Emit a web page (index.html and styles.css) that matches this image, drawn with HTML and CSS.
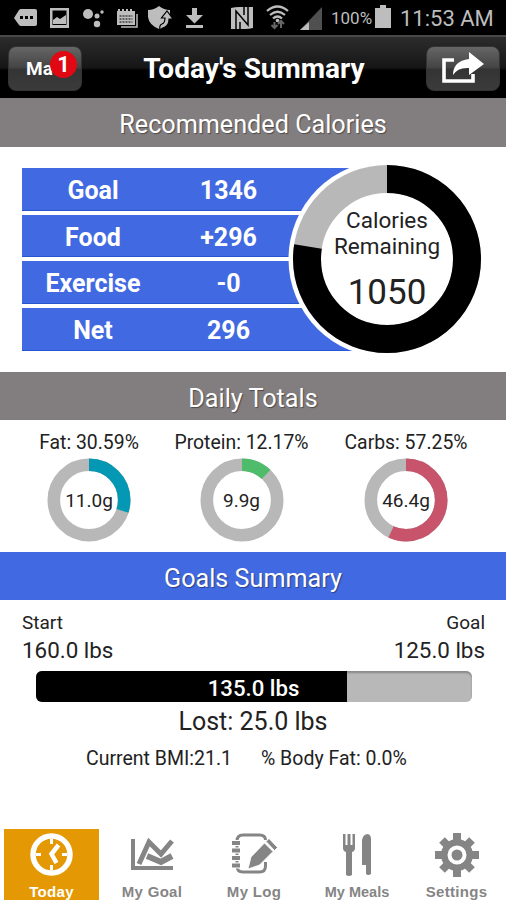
FILE: index.html
```html
<!DOCTYPE html>
<html lang="en">
<head>
  <meta charset="UTF-8" />
  <meta name="viewport" content="width=device-width, initial-scale=1.0"/>
  <title>Today's Summary</title>
  <link rel="stylesheet" href="styles.css">
</head>
<body>
  <!-- phone status bar -->
  <div class="status">
    <svg class="status-left" width="231" height="35" viewBox="0 0 231 35" fill="#bdbdbd">
      <path d="M14 18l5-8q1-1 2-1h14q2 0 2 2v13q0 2-2 2H21q-1 0-2-1z"/>
      <path d="M20 16h3v3h-3zM25 16h3v3h-3zM30 16h3v3h-3z" fill="#000"/>
      <path d="M50 8h19v20H50zM52.500 10.500v14.500h14v-14.500z" fill-rule="evenodd"/>
      <path d="M53 24v-4l4-3 3 2 6-4v9z"/>
      <circle cx="88" cy="14" r="5"/><circle cx="97" cy="16" r="2.500"/><circle cx="102" cy="12" r="1.700"/><circle cx="97" cy="24" r="3.200"/>
      <path d="M117 11h18v14h-18z"/><path d="M121 27h16V14" fill="none" stroke="#bdbdbd" stroke-width="1.500"/>
      <path d="M119 9v4M123 9v4M127 9v4M131 9v4" stroke="#bdbdbd" stroke-width="2"/>
      <path d="M119.500 16h13M119.500 19h13M119.500 22h13" stroke="#000" stroke-width="1.200" stroke-dasharray="2 1"/>
      <path d="M148 10q6 0 11-4 5 4 11 4v7q-1 8-11 12-10-4-11-12z"/>
      <path d="M160 30q-1-5 2-6 3-1 3-6h-3.500l5.500-7 6 8h-4q0 6-4 8-3 1-5 3z" stroke="#000" stroke-width="1.200"/>
      <path d="M192 8h5v7h6l-8.500 8.500L186 15h6zM186 25h17v3h-17z"/>
    </svg>
    <svg class="status-right" width="92" height="35" viewBox="0 0 92 35" fill="#bdbdbd">
      <path d="M0 8q4-1 8-1h14v21q-4 1-8 1H0z"/>
      <path d="M5 29V11l12 14V7" fill="none" stroke="#000" stroke-width="1.500"/>
      <path d="M9 22v7M13 7v8" fill="none" stroke="#000" stroke-width="1.500"/>
      <g fill="none" stroke="#bdbdbd" stroke-width="2.300"><path d="M36 11q10.500-9 21 0M39 15q7.500-6.500 15 0M42 18.500q4.500-4 9 0"/></g>
      <circle cx="46.500" cy="20.500" r="1.800"/>
      <path d="M43.500 22v5m-3-2 3 3 3-3M50 28v-6m-3 2 3-3 3 3" fill="none" stroke="#666" stroke-width="2"/>
      <path d="M69 30L91 7v23z" fill="#505050"/><path d="M69 30l9-8v8z"/>
    </svg>
    <span class="battery-text">100%</span>
    <svg class="battery" width="16" height="24" viewBox="0 0 16 24" fill="#bdbdbd"><path d="M0 3h5V0h6v3h5v20H0z"/></svg>
    <span class="clock">11:53 AM</span>
  </div>

  <header>
    <button class="nav-btn menu-btn">Ma<span class="badge">1</span></button>
    <h1>Today's Summary</h1>
    <button class="nav-btn share-btn">
      <svg width="44" height="34" viewBox="0 0 44 34">
        <path d="M19 9H9v21h29V23" fill="none" stroke="#fff" stroke-width="3.600"/>
        <path d="M18 24q0-14 16-16V1l15 12-15 11v-7q-11-1-16 7z" fill="#fff"/>
      </svg>
    </button>
  </header>

  <h2 class="band">Recommended Calories</h2>
  <section class="calories">
    <div class="rows">
      <div class="row"><span>Goal</span><span>1346</span></div>
      <div class="row"><span>Food</span><span>+296</span></div>
      <div class="row"><span>Exercise</span><span>-0</span></div>
      <div class="row"><span>Net</span><span>296</span></div>
    </div>
    <div class="big-ring">
      <svg width="198" height="198" viewBox="0 0 198 198">
        <circle cx="99" cy="99" r="98.500" fill="#fff"/>
        <circle cx="99" cy="99" r="80" class="track" stroke-width="28"/>
        <circle cx="99" cy="99" r="80" class="arc" stroke="#000" stroke-width="28" pathLength="100" stroke-dasharray="77.5 100" transform="rotate(-90 99 99)"/>
      </svg>
      <div class="ring-text">
        <span>Calories</span>
        <span>Remaining</span>
        <strong>1050</strong>
      </div>
    </div>
  </section>

  <h2 class="band">Daily Totals</h2>
  <section class="totals">
    <div class="total fat">
      <p>Fat: 30.59%</p>
      <div class="ring">
        <svg width="84" height="84" viewBox="0 0 84 84">
          <circle cx="42" cy="42" r="35.200" class="track" stroke-width="12.600"/>
          <circle cx="42" cy="42" r="35.200" class="arc" stroke="#0598b4" stroke-width="12.600" pathLength="100" stroke-dasharray="30 100" transform="rotate(-90 42 42)"/>
        </svg>
        <span>11.0g</span>
      </div>
    </div>
    <div class="total protein">
      <p>Protein: 12.17%</p>
      <div class="ring">
        <svg width="84" height="84" viewBox="0 0 84 84">
          <circle cx="42" cy="42" r="35.200" class="track" stroke-width="12.600"/>
          <circle cx="42" cy="42" r="35.200" class="arc" stroke="#4fbc6b" stroke-width="12.600" pathLength="100" stroke-dasharray="12 100" transform="rotate(-90 42 42)"/>
        </svg>
        <span>9.9g</span>
      </div>
    </div>
    <div class="total carbs">
      <p>Carbs: 57.25%</p>
      <div class="ring">
        <svg width="84" height="84" viewBox="0 0 84 84">
          <circle cx="42" cy="42" r="35.200" class="track" stroke-width="12.600"/>
          <circle cx="42" cy="42" r="35.200" class="arc" stroke="#c8546c" stroke-width="12.600" pathLength="100" stroke-dasharray="57 100" transform="rotate(-90 42 42)"/>
        </svg>
        <span>46.4g</span>
      </div>
    </div>
  </section>

  <h2 class="band blue">Goals Summary</h2>
  <section class="goals">
    <div class="ends">
      <div><small>Start</small><p>160.0 lbs</p></div>
      <div class="end"><small>Goal</small><p>125.0 lbs</p></div>
    </div>
    <div class="bar">
      <div class="fill" style="width: 71.5%"></div>
      <span>135.0 lbs</span>
    </div>
    <p class="lost">Lost: 25.0 lbs</p>
    <div class="body-stats">
      <span class="bmi">Current BMI:21.1</span>
      <span class="body-fat">% Body Fat: 0.0%</span>
    </div>
  </section>

  <nav>
    <a class="tab active" href="#today">
      <svg width="44" height="44" viewBox="0 0 44 44" fill="none" stroke="#fff">
        <circle cx="21.500" cy="21.500" r="18.500" stroke-width="5.500"/>
        <path d="M21.500 6v5M21.500 32v5M6 21.500h5M32 21.500h5" stroke-width="3"/>
        <path d="M28.500 12l-7 9 5 9" stroke-width="4.500"/>
      </svg>
      <span>Today</span>
    </a>
    <a class="tab" href="#goal">
      <svg width="44" height="44" viewBox="0 0 44 44" fill="none" stroke="#858585">
        <path d="M3 6v29H43" stroke-width="4"/>
        <path d="M9 31L19 9l12 12L42 8" stroke-width="5"/>
        <path d="M17 23l14 6 11-6" stroke-width="6"/>
      </svg>
      <span>My Goal</span>
    </a>
    <a class="tab" href="#log">
      <svg width="44" height="44" viewBox="0 0 44 44" fill="none" stroke="#858585">
        <path d="M33.500 7q0-5-6-5H11q-6 0-6 6v25q0 6 6 6h16.500q6 0 6-6v-4" stroke-width="3"/>
        <path d="M0 10h8M0 17.500h8M0 25h8M0 32.500h8" stroke="#fff" stroke-width="6"/>
        <path d="M0 10h8M0 17.500h8M0 25h8M0 32.500h8" stroke-width="4"/>
        <path d="M16 36l3-12L32.500 10l8.500 8.500L27.500 32zM34 8.500L37 5.500l8.500 9-3 3z" fill="#858585" stroke="#fff" stroke-width="0.800"/>
      </svg>
      <span>My Log</span>
    </a>
    <a class="tab meals" href="#meals">
      <svg width="44" height="44" viewBox="0 0 44 44" fill="#858585">
        <path d="M8 1h2.500v11h2V1h3v11h2V1H20v14q0 3-3 4v23q-3 2-6 0V19q-3-1-3-4z"/>
        <path d="M27 32V7q1-6 6-6 3 1 3 5v35q-3 2-5 0v-9z"/>
      </svg>
      <span>My Meals</span>
    </a>
    <a class="tab" href="#settings">
      <svg width="44" height="44" viewBox="0 0 44 44" fill="none" stroke="#858585">
        <g stroke-width="8"><path d="M22 0v44M0 22h44M7 7l30 30M37 7L7 37"/></g>
        <circle cx="22" cy="22" r="16" fill="#858585" stroke="none"/>
        <circle cx="22" cy="22" r="7.500" fill="#858585" stroke="#fff" stroke-width="4"/>
      </svg>
      <span>Settings</span>
    </a>
  </nav>
</body>
</html>
```

FILE: styles.css
```css
* {
  margin: 0;
  padding: 0;
  box-sizing: border-box;
}
body {
  width: 506px;
  height: 900px;
  overflow: hidden;
  display: flex;
  flex-direction: column;
  background: #fff;
  color: #222;
  font-family: Roboto, sans-serif;
}
svg {
  display: block;
  flex: none;
  overflow: visible;
}
span, p, small {
  white-space: nowrap;
}

.status {
  display: flex;
  align-items: center;
  height: 35px;
  background: #000;
  color: #bdbdbd;
  overflow: hidden;
}
.battery-text {
  width: 40px;
  margin-left: 8px;
  padding-top: 1px;
  font-size: 17px;
}
.battery {
  margin-left: 4px;
}
.clock {
  margin-left: 9px;
  padding-top: 2px;
  font-size: 22px;
}

header {
  display: flex;
  justify-content: space-between;
  align-items: center;
  height: 63px;
  padding: 2px 6px 0 8px;
  border-top: 2px solid #484848;
  background: linear-gradient(#2c2c2c, #161616 50%, #000 55%);
  color: #fff;
}
h1 {
  padding-top: 1px;
  font-size: 28px;
  font-weight: 700;
}
.nav-btn {
  position: relative;
  width: 74px;
  height: 45px;
  border: 1px solid #333;
  border-radius: 8px;
  background: linear-gradient(#666, #444 48%, #343434 52%, #3b3b3b);
  color: #fff;
  font-family: Roboto, sans-serif;
  font-size: 19px;
  font-weight: 700;
}
.menu-btn {
  padding-left: 17px;
  text-align: left;
}
.badge {
  position: absolute;
  top: 4px;
  left: 41px;
  width: 27px;
  height: 27px;
  border-radius: 50%;
  background: #e00812;
  font-size: 22px;
  line-height: 27px;
  text-align: center;
}
.share-btn {
  padding-left: 8px;
}

.band {
  height: 49px;
  background: #827d7e;
  color: #fff;
  font-size: 25.2px;
  font-weight: 400;
  line-height: 54px;
  text-align: center;
  text-shadow: 1px 1px 1px rgba(0, 0, 0, 0.4);
}
.totals + .band, .calories + .band {
  height: 48px;
}
.band.blue {
  background: #4169e1;
}

.calories {
  display: flex;
  height: 225px;
  padding: 21px 0 0 22px;
}
.rows {
  display: flex;
  flex-direction: column;
  gap: 4px;
  width: 360px;
}
.row {
  display: flex;
  height: 42.750px;
  background: #4169e1;
  border-bottom: 1px solid #2457d0;
  color: #fff;
  font-size: 25px;
  font-weight: 700;
  line-height: 46px;
  text-align: center;
}
.row span:first-child {
  width: 142px;
}
.row span:last-child {
  width: 129px;
}
.big-ring {
  display: grid;
  width: 198px;
  height: 198px;
  margin: -7.500px 0 0 -94px;
}
.big-ring > *, .ring > * {
  grid-area: 1 / 1;
}
.track, .arc {
  fill: none;
}
.track {
  stroke: #b8b8b8;
}
.ring-text {
  display: flex;
  flex-direction: column;
  align-items: center;
  padding-top: 47px;
  font-size: 22.5px;
  line-height: 26px;
}
.ring-text strong {
  margin-top: 15px;
  font-size: 35px;
  font-weight: 400;
  line-height: 38px;
}

.totals {
  display: flex;
  height: 133px;
  padding: 10px 0 0 39px;
  gap: 35px;
  font-size: 19.4px;
}
.total {
  display: flex;
  flex-direction: column;
  align-items: center;
  width: 100px;
}
.protein {
  width: 135px;
}
.carbs {
  width: 124px;
}
.total p {
  height: 28px;
  line-height: 25px;
}
.ring {
  display: grid;
  place-items: center;
}
.ring span {
  padding-top: 2px;
  font-size: 19px;
}

.goals {
  height: 229px;
  padding-top: 10px;
}
.ends {
  display: flex;
  justify-content: space-between;
  padding: 0 21px 0 22px;
  font-size: 22.4px;
  line-height: 31px;
}
.ends small {
  display: block;
  font-size: 19px;
  line-height: 25px;
}
.end {
  text-align: right;
}
.bar {
  display: grid;
  width: 436px;
  height: 31px;
  margin: 5px 0 0 35.500px;
  overflow: hidden;
  border-radius: 6px;
  background: #b8b8b8;
  box-shadow: inset 0 2px 2px #888;
}
.bar > * {
  grid-area: 1 / 1;
}
.fill {
  background: #000;
}
.bar span {
  color: #fff;
  font-size: 22.2px;
  font-weight: 500;
  line-height: 34px;
  text-align: center;
}
.lost {
  font-size: 25px;
  line-height: 39px;
  text-align: center;
}
.body-stats {
  display: flex;
  margin-top: 6px;
  padding-left: 86px;
  gap: 29px;
  font-size: 19.5px;
  line-height: 24px;
}
.bmi {
  width: 146px;
}

nav {
  display: flex;
  height: 71px;
  padding-left: 4px;
}
.tab {
  display: flex;
  flex-direction: column;
  align-items: center;
  width: 102px;
  padding-top: 4px;
  color: #858585;
  font-family: "Liberation Sans", Arial, sans-serif;
  font-size: 15px;
  font-weight: 700;
  letter-spacing: 0.3px;
  line-height: 16px;
  text-decoration: none;
}
.tab span {
  margin-top: 7px;
}
.tab.meals {
  width: 104px;
  font-size: 14.5px;
  letter-spacing: 0;
}
.tab.meals + .tab {
  width: 95px;
}
.tab.active {
  width: 95px;
  margin-right: 2px;
  background: #e49804;
  color: #fff;
}
```
